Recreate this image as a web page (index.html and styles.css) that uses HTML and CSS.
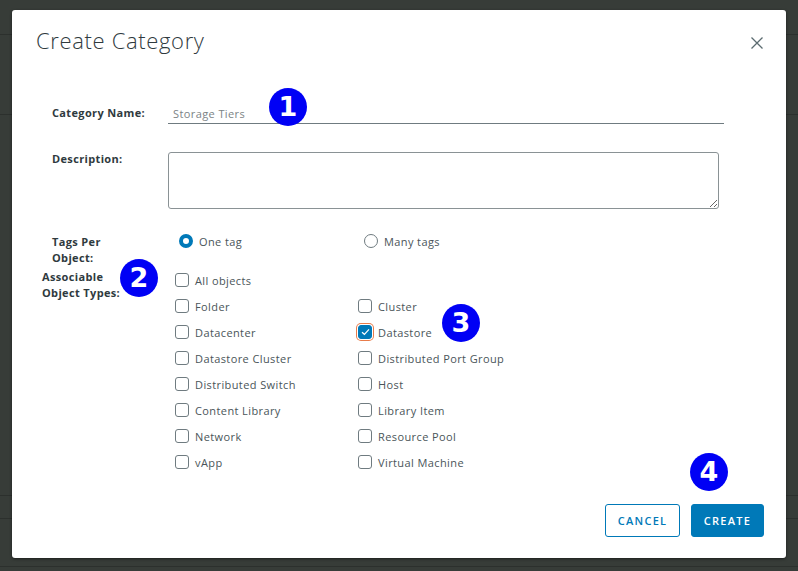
FILE: index.html
```html
<!DOCTYPE html>
<html lang="en">
<head>
<meta charset="utf-8">
<title>Create Category</title>
<link rel="stylesheet" href="styles.css">
</head>
<body>
<div class="modal">
  <div class="modal-header">
    <h1 class="modal-title">Create Category</h1>
    <button class="close" aria-label="Close">
      <svg width="12" height="12" viewBox="0 0 12 12"><path d="M0.5 0.5 L11.5 11.5 M11.5 0.5 L0.5 11.5" stroke="#5b6b70" stroke-width="1.3" fill="none"/></svg>
    </button>
  </div>

  <form class="form">
    <label class="lbl lbl-name">Category Name:</label>
    <div class="ctl"><input class="text-input" type="text" value="Storage Tiers"></div>

    <label class="lbl lbl-desc">Description:</label>
    <div class="ctl ctl-desc"><textarea class="textarea"></textarea></div>

    <label class="lbl lbl-tags">Tags Per<br>Object:</label>
    <div class="ctl radios">
      <span class="radio-item"><span class="radio checked"></span>One tag</span>
      <span class="radio-item"><span class="radio"></span>Many tags</span>
    </div>

    <label class="lbl lbl-assoc">Associable<br>Object Types:</label>
    <div class="ctl checks">
      <span class="chk-item full"><span class="chk"></span>All objects</span>
      <span class="chk-item"><span class="chk"></span>Folder</span>
      <span class="chk-item"><span class="chk"></span>Cluster</span>
      <span class="chk-item"><span class="chk"></span>Datacenter</span>
      <span class="chk-item"><span class="chk checked"><svg width="9" height="8" viewBox="0 0 9 8"><path d="M1 4.2 L3.4 6.3 L8 1.3" stroke="#fff" stroke-width="1.2" fill="none"/></svg></span>Datastore</span>
      <span class="chk-item"><span class="chk"></span>Datastore Cluster</span>
      <span class="chk-item"><span class="chk"></span>Distributed Port Group</span>
      <span class="chk-item"><span class="chk"></span>Distributed Switch</span>
      <span class="chk-item"><span class="chk"></span>Host</span>
      <span class="chk-item"><span class="chk"></span>Content Library</span>
      <span class="chk-item"><span class="chk"></span>Library Item</span>
      <span class="chk-item"><span class="chk"></span>Network</span>
      <span class="chk-item"><span class="chk"></span>Resource Pool</span>
      <span class="chk-item"><span class="chk"></span>vApp</span>
      <span class="chk-item"><span class="chk"></span>Virtual Machine</span>
    </div>
  </form>

  <div class="modal-footer">
    <button class="btn btn-outline">CANCEL</button>
    <button class="btn btn-primary">CREATE</button>
  </div>

  <span class="marker m1">1</span>
  <span class="marker m2">2</span>
  <span class="marker m3">3</span>
  <span class="marker m4">4</span>
</div>
</body>
</html>
```

FILE: styles.css
```css
* { box-sizing: border-box; }

html, body { height: 100%; }

body {
  margin: 0;
  overflow: hidden;
  font-family: "Open Sans", "Noto Sans", sans-serif;
  background-color: #373c38;
  background-image:
    linear-gradient(#2c302d, #2c302d),
    linear-gradient(#2c302d, #2c302d),
    linear-gradient(#2c302d, #2c302d),
    linear-gradient(#2c302d, #2c302d),
    linear-gradient(#2c302d, #2c302d);
  background-repeat: no-repeat;
  background-size: 100% 1px;
  background-position: 0 34px, 0 114px, 0 495px, 0 518px, 0 566px;
  padding: 10px 12px 13px 12px;
}

.modal {
  position: relative;
  width: 774px;
  height: 548px;
  background: #fff;
  border-radius: 3px;
  box-shadow: 0 1px 3px rgba(0,0,0,0.5);
  display: flex;
  flex-direction: column;
}

.modal-header {
  display: flex;
  justify-content: space-between;
  align-items: flex-start;
  padding: 16px 23px 0 24px;
}

.modal-title {
  margin: 0;
  font-size: 22px;
  line-height: 28px;
  font-weight: 300;
  color: #2f3a3e;
  letter-spacing: 0.65px;
}

.close {
  border: 0;
  background: none;
  padding: 0;
  margin-top: 11px;
  width: 12px;
  height: 12px;
  display: flex;
}

.form {
  margin-top: 45px;
  padding: 0 62px 0 40px;
  display: grid;
  grid-template-columns: 116px 1fr;
  align-items: start;
}

.lbl {
  font-size: 11px;
  line-height: 16px;
  font-weight: 700;
  color: #2f3a3e;
  letter-spacing: 0.35px;
}

.lbl-name { margin-top: 6px; }
.lbl-desc { margin-top: 27px; }
.lbl-tags { margin-top: 25px; }
.lbl-assoc { margin-top: 3px; margin-left: -10px; }

.ctl { min-width: 0; }

.text-input {
  display: block;
  width: 100%;
  height: 25px;
  border: 0;
  border-bottom: 1px solid #6f7b80;
  padding: 4px 5px 0 5px;
  font-family: inherit;
  font-size: 11px;
  line-height: 18px;
  letter-spacing: 0.4px;
  color: #7c8386;
  outline: none;
}

.ctl-desc { margin-top: 28px; padding-right: 5px; }

.textarea {
  display: block;
  width: 100%;
  height: 57px;
  border: 1px solid #8a9295;
  border-radius: 3px;
  font-family: inherit;
  font-size: 11px;
  resize: vertical;
}

.radios {
  margin-top: 24px;
  display: flex;
  padding-left: 11px;
  height: 16px;
  align-items: center;
}

.radio-item {
  width: 185px;
  display: flex;
  align-items: center;
  gap: 6px;
  font-size: 11px;
  letter-spacing: 0.4px;
  color: #4a5559;
}

.radio {
  width: 14px;
  height: 14px;
  border-radius: 50%;
  border: 1px solid #6f7b80;
  flex: none;
}

.radio.checked {
  border: 4.5px solid #0079b8;
}

.checks {
  margin-top: 1px;
  display: grid;
  grid-template-columns: 183px 183px;
  grid-auto-rows: 26px;
  padding-left: 7px;
}

.chk-item {
  display: flex;
  align-items: center;
  gap: 6px;
  font-size: 11px;
  letter-spacing: 0.4px;
  color: #4a5559;
  white-space: nowrap;
}

.chk-item.full { grid-column: 1 / span 2; }

.chk {
  width: 14px;
  height: 14px;
  border: 1px solid #6f7b80;
  border-radius: 3px;
  flex: none;
  display: flex;
  align-items: center;
  justify-content: center;
}

.chk.checked {
  background: #0079b8;
  border-color: #0079b8;
  box-shadow: 0 0 0 1px #fff, 0 0 0 2px #e87c4a;
}

.modal-footer {
  margin-top: auto;
  display: flex;
  justify-content: flex-end;
  gap: 11px;
  padding: 0 22px 21px 0;
}

.btn {
  height: 33px;
  border-radius: 3px;
  font-family: inherit;
  font-size: 11px;
  font-weight: 600;
  letter-spacing: 1.3px;
  padding: 0;
}

.btn-outline {
  width: 75px;
  border: 1px solid #0079b8;
  background: #fff;
  color: #0079b8;
}

.btn-primary {
  width: 73px;
  border: 1px solid #0079b8;
  background: #0079b8;
  color: #fff;
}

.marker {
  position: absolute;
  width: 38px;
  height: 38px;
  border-radius: 50%;
  background: #0000f5;
  color: #fff;
  font-family: "DejaVu Sans", sans-serif;
  font-weight: bold;
  font-size: 27px;
  line-height: 38px;
  text-align: center;
}

.m1 { left: 257px; top: 78px; }
.m2 { left: 108px; top: 249px; }
.m3 { left: 430px; top: 294px; }
.m4 { left: 678px; top: 443px; }
```
